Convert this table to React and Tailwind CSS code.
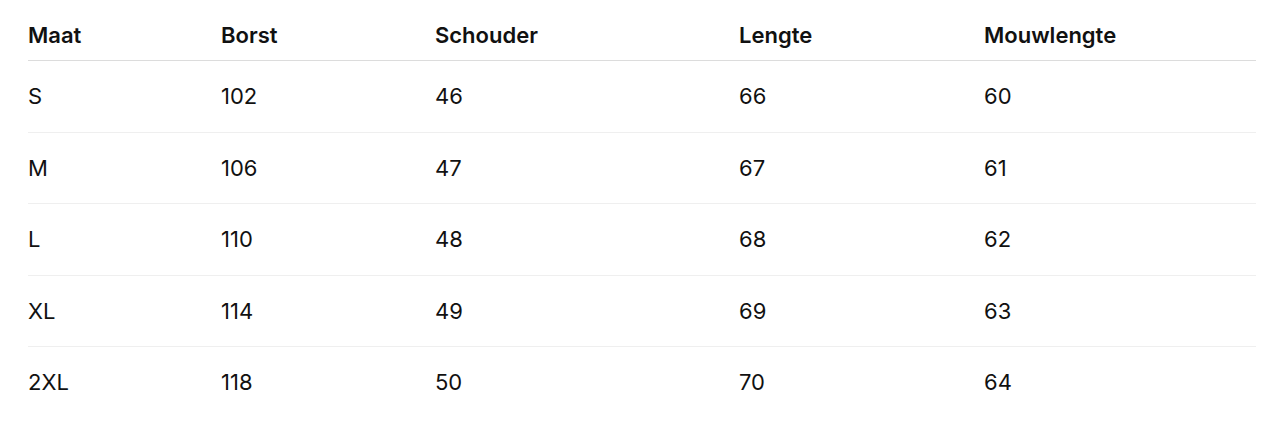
const columns = ['Maat', 'Borst', 'Schouder', 'Lengte', 'Mouwlengte'];

const rows = [
  ['S', '102', '46', '66', '60'],
  ['M', '106', '47', '67', '61'],
  ['L', '110', '48', '68', '62'],
  ['XL', '114', '49', '69', '63'],
  ['2XL', '118', '50', '70', '64'],
];

export default function App() {
  return (
    <div className="min-h-[440px] bg-white pl-[28px] pr-4 font-['Inter',sans-serif] text-[#111111]">
      <table className="w-full table-fixed border-collapse text-left text-[22px]">
        <colgroup>
          <col className="w-[193px]" />
          <col className="w-[214px]" />
          <col className="w-[304px]" />
          <col className="w-[245px]" />
          <col />
        </colgroup>
        <thead>
          <tr className="border-b border-[#dcdcdc]">
            {columns.map((c) => (
              <th key={c} className="pt-[21px] pb-[11px] font-semibold leading-7">
                {c}
              </th>
            ))}
          </tr>
        </thead>
        <tbody>
          {rows.map((r, i) => (
            <tr
              key={r[0]}
              className={i < rows.length - 1 ? 'border-b border-[#efefef]' : ''}
            >
              {r.map((v, j) => (
                <td key={j} className="py-[21.25px] font-normal leading-7">
                  {v}
                </td>
              ))}
            </tr>
          ))}
        </tbody>
      </table>
    </div>
  );
}
